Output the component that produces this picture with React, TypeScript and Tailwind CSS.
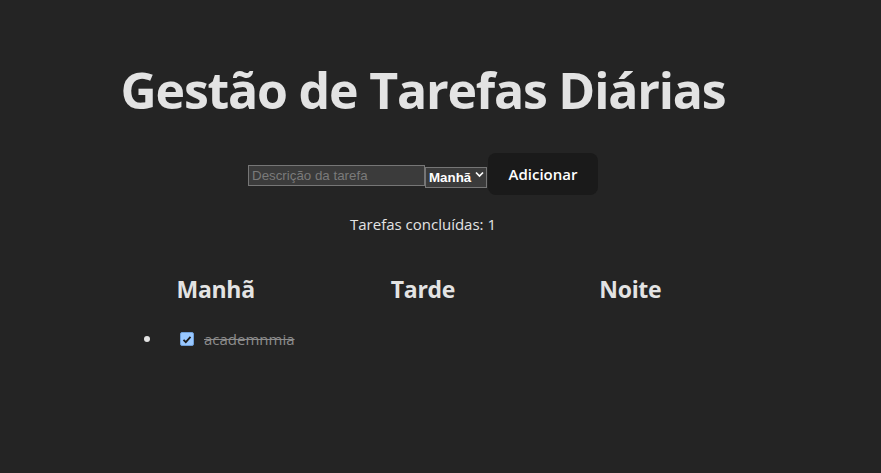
import React from "react";

const columns = ["Manhã", "Tarde", "Noite"];

const App = () => {
  return (
    <div className="min-h-screen bg-[#242424] text-[#e3e3e3] font-['Open_Sans',sans-serif]">
      <div className="flex flex-col items-center text-center pr-[35px] pt-[63px]">
        <h1 className="text-[50px] font-bold leading-[55px] tracking-[-1.2px]">Gestão de Tarefas Diárias</h1>

        <div className="flex items-center mt-[35px]">
          <input
            type="text"
            placeholder="Descrição da tarefa"
            className="mt-[3px] w-[177px] h-[21px] px-[3px] bg-[#3b3b3b] border border-[#767676] text-[13.33px] leading-[19px] font-['Liberation_Sans',Arial,sans-serif] text-white placeholder:text-[#7a7a7a] placeholder:text-[13.33px] outline-none"
          />
          <div className="relative mt-[3px]">
            <select className="appearance-none w-[62px] h-[21px] pl-[3px] bg-[#3b3b3b] border border-[#767676] text-[13.33px] leading-[17px] font-['Liberation_Sans',Arial,sans-serif] font-semibold text-white outline-none">
              <option>Manhã</option>
              <option>Tarde</option>
              <option>Noite</option>
            </select>
            <svg
              className="absolute right-[3px] top-[7px] pointer-events-none"
              width="9"
              height="7"
              viewBox="0 0 9 7"
              fill="none"
            >
              <path d="M1 1.5l3.5 3.5L8 1.5" stroke="#ffffff" strokeWidth="1.7" />
            </svg>
          </div>
          <button className="ml-[1px] w-[110px] h-[42px] rounded-[8px] bg-[#1a1a1a] text-[15px] font-semibold text-white">
            Adicionar
          </button>
        </div>

        <p className="mt-[17px] text-[15px] leading-[24px]">Tarefas concluídas: 1</p>

        <div className="grid grid-cols-3 w-[622px] mt-[35px]">
          {columns.map((col, i) => (
            <div key={col}>
              <h2 className="text-[23px] font-bold leading-[36px] tracking-[-0.3px]">{col}</h2>
              <ul className="mt-[20px]">
                {i === 0 && (
                  <li className="flex items-center h-[24px]">
                    <span className="ml-[32px] w-[6px] h-[6px] rounded-full bg-[#e3e3e3]" />
                    <span className="ml-[30px] w-[14px] h-[14px] rounded-[2px] bg-[#99c8ff] border border-[#6f9fd8] flex items-center justify-center">
                      <svg width="10" height="9" viewBox="0 0 10 9" fill="none">
                        <path d="M1.5 4.8l2.3 2.4L8.5 1.8" stroke="#1b1b1b" strokeWidth="1.8" />
                      </svg>
                    </span>
                    <span className="ml-[10px] text-[15px] text-[#8c8c8c] line-through">academnmia</span>
                  </li>
                )}
              </ul>
            </div>
          ))}
        </div>
      </div>
    </div>
  );
};

export default App;
